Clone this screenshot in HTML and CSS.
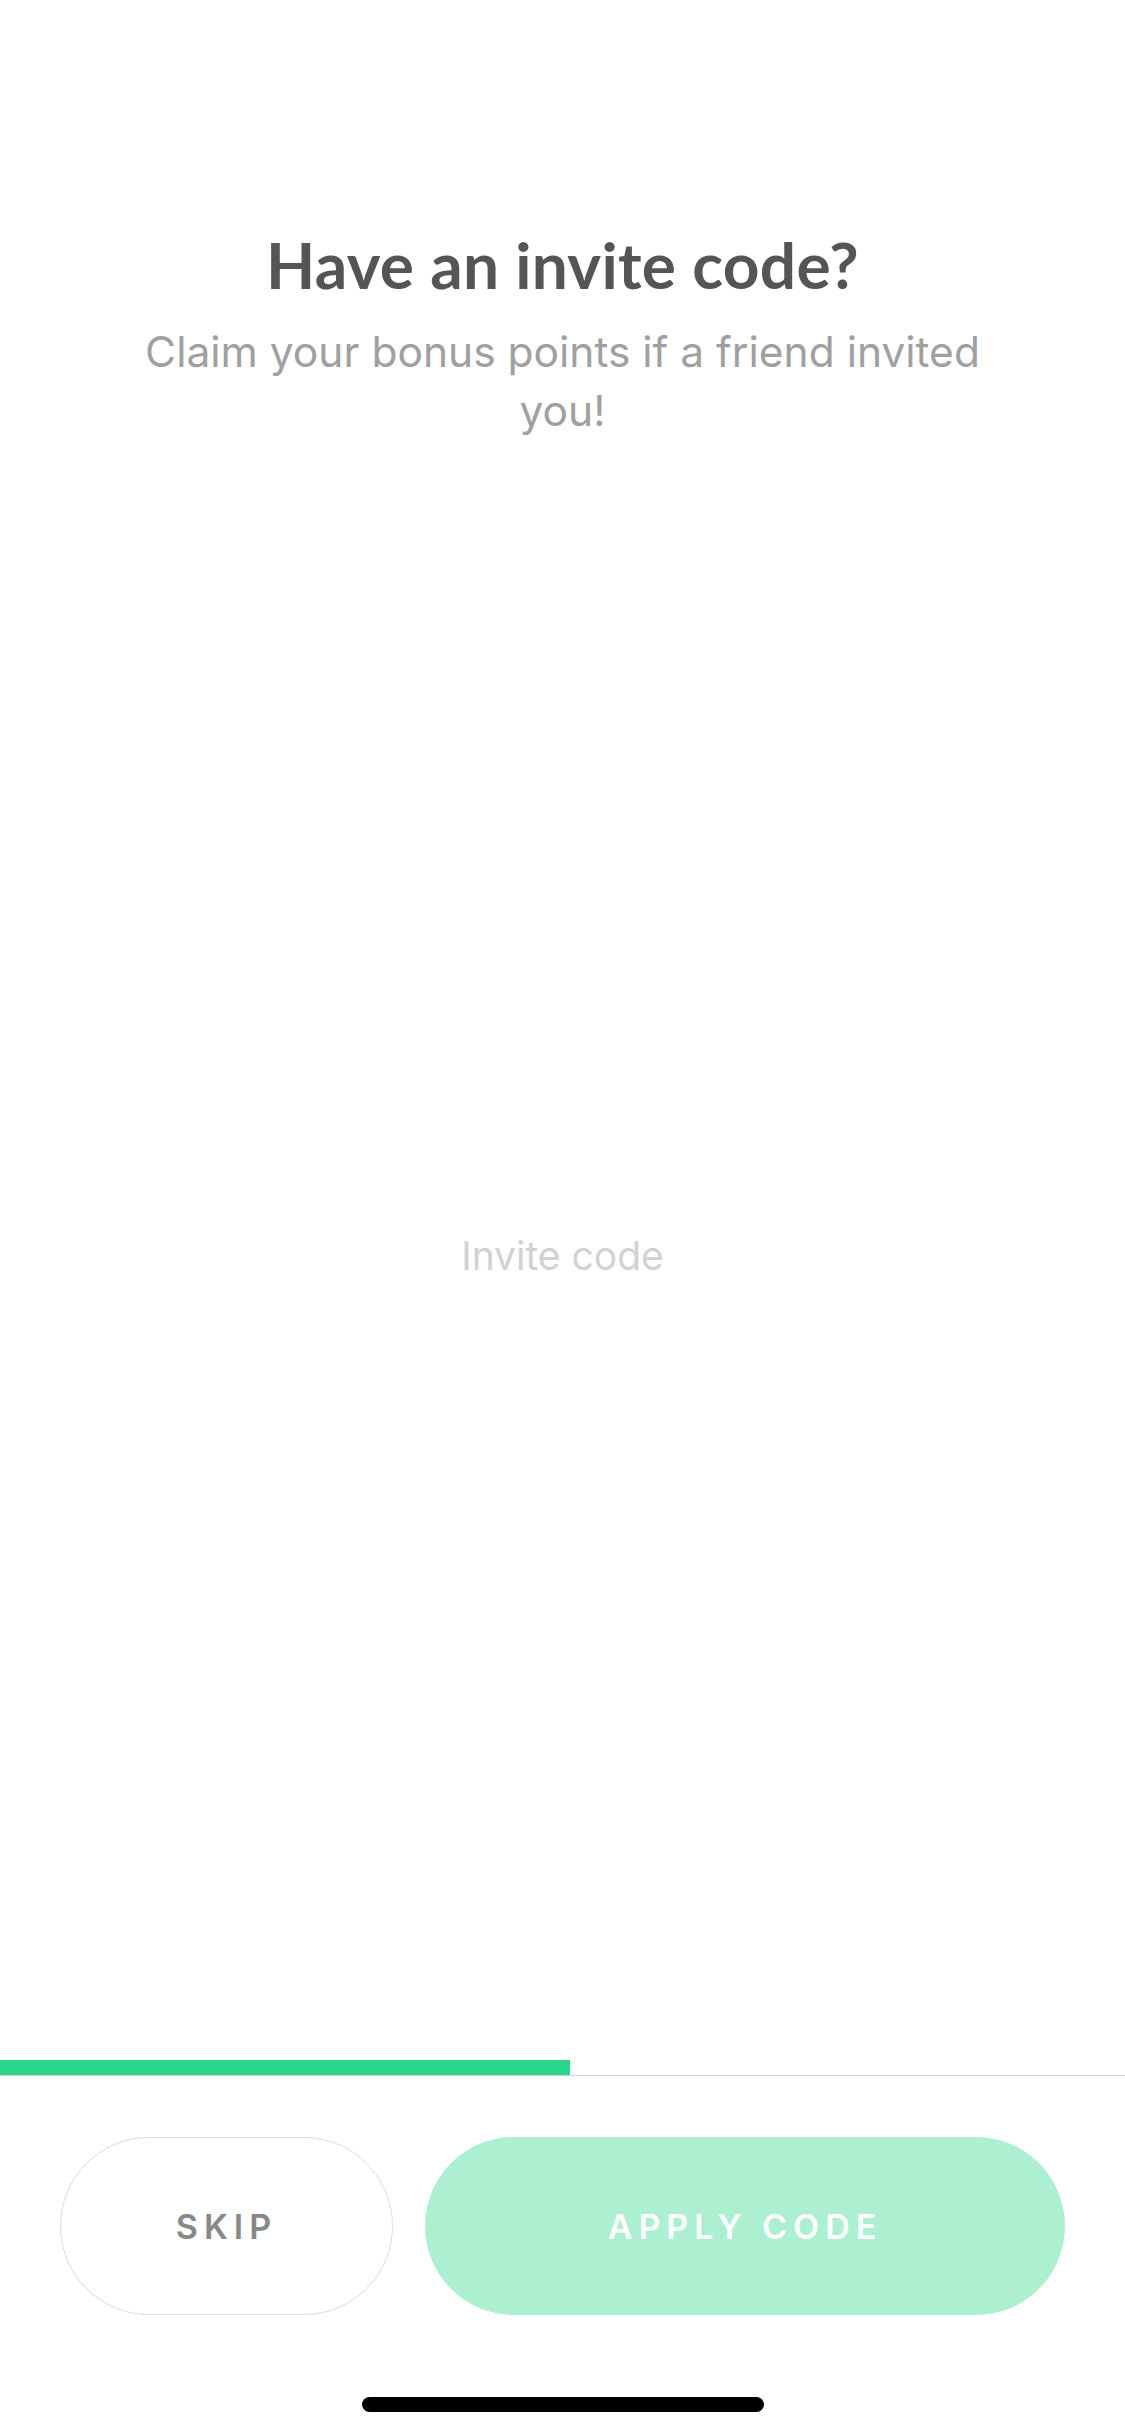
FILE: index.html
```html
<!DOCTYPE html>
<html lang="en">
<head>
<meta charset="utf-8">
<title>Have an invite code?</title>
<link rel="stylesheet" href="styles.css">
</head>
<body>
<main class="screen">
  <header class="intro">
    <h1 class="title">Have an invite code?</h1>
    <p class="subtitle">Claim your bonus points if a friend invited you!</p>
  </header>
  <section class="field">
    <input class="code-input" type="text" placeholder="Invite code" aria-label="Invite code">
  </section>
  <div class="progress"><div class="progress-fill" style="width: 570px"></div></div>
  <footer class="actions">
    <button class="btn btn-skip" type="button">SKIP</button>
    <button class="btn btn-apply" type="button">APPLY CODE</button>
  </footer>
  <div class="home-area"><div class="home-indicator"></div></div>
</main>
</body>
</html>
```
FILE: styles.css
```css
html, body {
  margin: 0;
  padding: 0;
  background: #ffffff;
}
.screen {
  width: 1125px;
  height: 2436px;
  display: flex;
  flex-direction: column;
  font-family: Inter, "Noto Sans", sans-serif;
}
.intro {
  padding: 225px 140px 0;
  text-align: center;
}
.title {
  margin: 0;
  font-family: Lato, Inter, sans-serif;
  font-weight: 700;
  font-size: 64px;
  line-height: 80px;
  color: #555555;
  letter-spacing: 0.3px;
}
.subtitle {
  margin: 17px 0 0;
  font-size: 42.5px;
  line-height: 59px;
  color: #a0a0a0;
  font-weight: 400;
}
.field {
  flex: 1;
  display: flex;
  align-items: center;
  justify-content: center;
  padding-top: 12px;
}
.code-input {
  width: 800px;
  border: none;
  outline: none;
  background: transparent;
  text-align: center;
  font-family: Inter, "Noto Sans", sans-serif;
  font-size: 39px;
  line-height: 50px;
  color: #444444;
  padding: 0;
}
.code-input::placeholder {
  color: #d2d2d2;
}
.progress {
  height: 15px;
  border-bottom: 1px solid #d4d4d4;
  display: flex;
}
.progress-fill {
  height: 15px;
  background: #2bd68a;
}
.actions {
  display: flex;
  gap: 32px;
  padding: 61px 60px 0;
}
.btn {
  box-sizing: border-box;
  height: 178px;
  border-radius: 89px;
  font-family: Inter, "Noto Sans", sans-serif;
  font-size: 34px;
  font-weight: 600;
  letter-spacing: 6px;
  cursor: pointer;
}
.btn-skip {
  width: 333px;
  background: #ffffff;
  border: 1.5px solid #dddddd;
  color: #888888;
}
.btn-apply {
  flex: 1;
  background: #acefd1;
  border: none;
  color: #ffffff;
}
.home-area {
  display: flex;
  justify-content: center;
  padding: 82px 0 24px;
}
.home-indicator {
  width: 402px;
  height: 15px;
  border-radius: 8px;
  background: #000000;
}
```
